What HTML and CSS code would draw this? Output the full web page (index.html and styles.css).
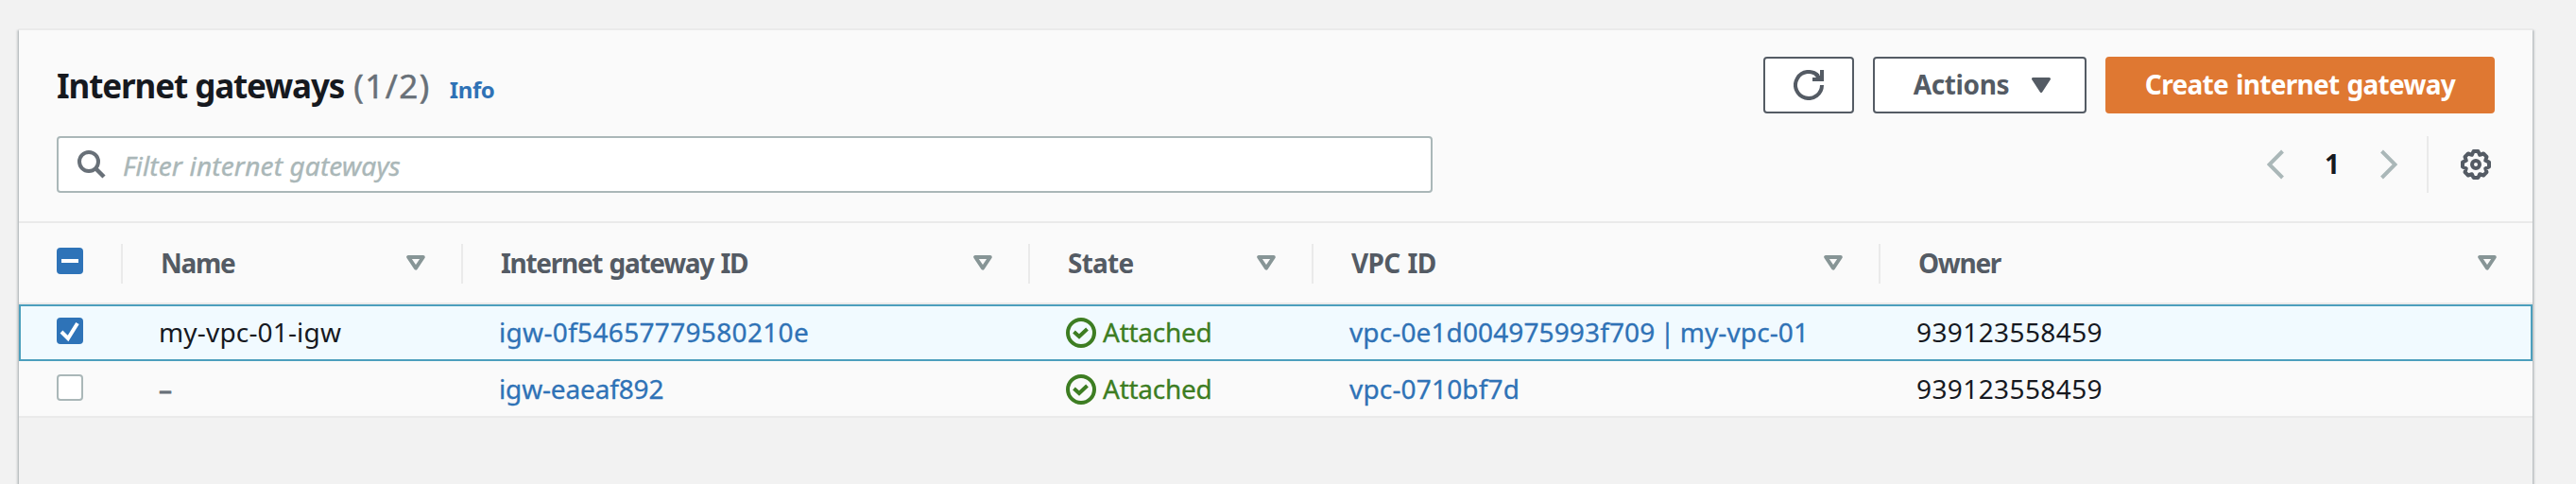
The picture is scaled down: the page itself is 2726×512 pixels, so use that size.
FILE: index.html
```html
<!DOCTYPE html>
<html lang="en">
<head>
<meta charset="utf-8">
<title>Internet gateways</title>
<link rel="stylesheet" href="styles.css">
</head>
<body>
<svg class="defs" width="0" height="0">
  <symbol id="sort" viewBox="0 0 20 16"><path d="M2.200 2h15.600L10 13.600z" fill="none" stroke="#879596" stroke-width="4" stroke-linejoin="round"/></symbol>
  <symbol id="ok" viewBox="0 0 32 32"><circle cx="16" cy="16" r="14" fill="none" stroke="#3d7d22" stroke-width="4"/><path d="M8.500 15l5.500 5 8.500-8" fill="none" stroke="#3d7d22" stroke-width="4"/></symbol>
</svg>
<main class="panel">
  <header class="head">
    <div class="title-row">
      <h1 class="title"><span class="title-name">Internet gateways</span><span class="count">(1/2)</span><a class="info">Info</a></h1>
      <div class="actions">
        <button class="btn refresh"><svg width="32" height="32" viewBox="0 0 32 32"><path d="M30 16a14 14 0 1 1-4-9.800" fill="none" stroke="#545b64" stroke-width="4"/><path d="M28 0h4v12H20V8h8z" fill="#545b64"/><path d="M23.500 4.500l5 5" stroke="#545b64" stroke-width="4"/></svg></button>
        <button class="btn menu"><span class="label">Actions</span><svg width="20" height="16" viewBox="0 0 20 16"><path d="M1.500 1.500h17L10 14.500z" fill="#545b64" stroke="#545b64" stroke-width="3" stroke-linejoin="round"/></svg></button>
        <button class="btn primary"><span class="label">Create internet gateway</span></button>
      </div>
    </div>
    <div class="filter-row">
      <div class="search"><svg width="30" height="30" viewBox="0 0 30 30"><circle cx="12" cy="12" r="10" fill="none" stroke="#687078" stroke-width="4"/><path d="M19 19l9 9" stroke="#687078" stroke-width="4.500"/></svg><span class="placeholder">Filter internet gateways</span></div>
      <div class="pager">
        <svg width="18" height="32" viewBox="0 0 18 32"><path d="M16.500 2L2.500 16l14 14" fill="none" stroke="#aab7b8" stroke-width="4"/></svg>
        <b class="page">1</b>
        <svg width="18" height="32" viewBox="0 0 18 32"><path d="M1.500 2l14 14-14 14" fill="none" stroke="#aab7b8" stroke-width="4"/></svg>
        <i class="bar"></i>
        <svg width="32" height="32" viewBox="-16 -16 32 32" fill="none" stroke="#545b64" stroke-width="4"><path stroke-linejoin="round" d="M14 -2.400V2.400L10.200 4.200L11.500 8.100L8.100 11.500L4.200 10.200L2.400 14H-2.400L-4.200 10.200L-8.100 11.500L-11.500 8.100L-10.200 4.200L-14 2.400V-2.400L-10.200 -4.200L-11.500 -8.100L-8.100 -11.500L-4.200 -10.200L-2.400 -14H2.400L4.200 -10.200L8.100 -11.500L11.500 -8.100L10.200 -4.200Z"/><circle r="4"/></svg>
      </div>
    </div>
  </header>
  <section class="table">
    <div class="row header">
      <div class="cell"><span class="box on"><svg width="28" height="28"><path d="M5 14h18" stroke="#fff" stroke-width="4"/></svg></span></div>
      <div class="cell"><span class="col">Name</span><svg class="sort" width="20" height="16"><use href="#sort"/></svg></div>
      <div class="cell"><span class="col">Internet gateway ID</span><svg class="sort" width="20" height="16"><use href="#sort"/></svg></div>
      <div class="cell"><span class="col col-state">State</span><svg class="sort" width="20" height="16"><use href="#sort"/></svg></div>
      <div class="cell"><span class="col col-vpc">VPC ID</span><svg class="sort" width="20" height="16"><use href="#sort"/></svg></div>
      <div class="cell"><span class="col">Owner</span><svg class="sort" width="20" height="16"><use href="#sort"/></svg></div>
    </div>
    <div class="row selected">
      <div class="cell"><span class="box on"><svg width="28" height="28"><path d="M5 15l7 7L22 6" fill="none" stroke="#fff" stroke-width="4"/></svg></span></div>
      <div class="cell"><span class="name">my-vpc-01-igw</span></div>
      <div class="cell"><a class="link long">igw-0f54657779580210e</a></div>
      <div class="cell"><svg width="32" height="32"><use href="#ok"/></svg><span class="status">Attached</span></div>
      <div class="cell"><a class="link vpc">vpc-0e1d004975993f709 | my-vpc-01</a></div>
      <div class="cell"><span class="owner">939123558459</span></div>
    </div>
    <div class="row plain">
      <div class="cell"><span class="box"></span></div>
      <div class="cell"><span class="dash">–</span></div>
      <div class="cell"><a class="link short">igw-eaeaf892</a></div>
      <div class="cell"><svg width="32" height="32"><use href="#ok"/></svg><span class="status">Attached</span></div>
      <div class="cell"><a class="link name">vpc-0710bf7d</a></div>
      <div class="cell"><span class="owner">939123558459</span></div>
    </div>
  </section>
</main>
</body>
</html>
```

FILE: styles.css
```css
* { box-sizing: border-box; }
body {
  margin: 0;
  height: 512px;
  overflow: hidden;
  background: #f2f2f2;
  color: #16191f;
  font: 28px/40px "Noto Sans", "Open Sans", sans-serif;
  white-space: nowrap;
}
.defs { position: absolute; }
svg { flex: none; display: block; }
.panel {
  margin: 30px 46px 0 20px;
  height: 482px;
  border-top: 2px solid #eaeaea;
  background: #f2f2f2;
  box-shadow: 0 2px 2px rgba(0, 28, 36, .3), 2px 2px 2px rgba(0, 28, 36, .15), -2px 2px 2px rgba(0, 28, 36, .15);
}
.head {
  height: 204px;
  padding: 28px 40px 0;
  background: #fafafa;
  border-bottom: 2px solid #eaeaea;
}
.title-row, .filter-row { display: flex; justify-content: space-between; height: 60px; }
.filter-row { margin-top: 24px; }
.title { display: flex; align-items: baseline; margin: 0; font-size: 35px; line-height: 62px; }
.title-name { letter-spacing: -1.1px; }
.count { margin-left: 10px; font-weight: 400; color: #687078; letter-spacing: 1.5px; -webkit-text-stroke: .5px #687078; }
.info { margin-left: 20px; font-size: 24px; font-weight: 700; color: #2f72b6; letter-spacing: -.4px; }
.actions { display: flex; gap: 20px; }
.btn {
  display: flex;
  align-items: center;
  justify-content: center;
  height: 60px;
  padding: 0;
  border: 2px solid #545b64;
  border-radius: 4px;
  background: #fff;
  color: #545b64;
  font: 700 28px/40px "Noto Sans", sans-serif;
}
.label { padding-bottom: 2px; letter-spacing: -.4px; }
.refresh { width: 96px; }
.menu { width: 226px; gap: 24px; padding-left: 5px; }
.primary { width: 412px; border-color: #df7832; background: #df7832; color: #fff; }
.primary .label { letter-spacing: -.7px; word-spacing: 1.5px; }
.search {
  display: flex;
  align-items: center;
  gap: 18px;
  width: 1456px;
  padding-left: 20px;
  border: 2px solid #aab7b8;
  border-radius: 4px;
  background: #fff;
}
.placeholder { padding-top: 1px; color: #aab7b8; font-style: italic; letter-spacing: .15px; -webkit-text-stroke: .4px #aab7b8; }
.pager { display: flex; align-items: center; margin-right: 4px; }
.page { width: 102px; padding-bottom: 2px; text-align: center; }
.bar { width: 2px; height: 60px; margin: 0 34px 0 31px; background: #eaeaea; }
.row {
  display: grid;
  grid-template-columns: 110px 360px 600px 300px 600px 690px;
  height: 60px;
  background: #fafafa;
  border-bottom: 2px solid #eaeaea;
}
.cell { display: flex; align-items: center; padding-left: 38px; }
.cell:first-child { padding-left: 40px; }
.header { height: 86px; padding-top: 2px; align-items: center; font-weight: 700; color: #545b64; }
.header .cell { height: 42px; padding: 0 38px 0 40px; border-right: 2px solid #eaeaea; }
.header .cell:last-child { border-right: 0; }
.col { padding-bottom: 3px; letter-spacing: -1.3px; word-spacing: 1.5px; }
.col-state { letter-spacing: -.75px; }
.col-vpc { letter-spacing: -.7px; }
.sort { margin: 0 0 2px auto; }
.header .box { margin-bottom: 6px; }
.selected { border: 2px solid #4c9fbd; background: #f1faff; }
.selected .cell { padding-left: 36px; }
.selected .cell:first-child { padding-left: 38px; }
.selected .cell > :not(svg) { margin-bottom: 2px; }
.selected .cell > .box { margin-bottom: 4px; }
.plain .cell > svg { margin-top: 2px; }
.plain .cell > .box { margin-bottom: 2px; }
.box { width: 28px; height: 28px; border: 2px solid #aab7b8; border-radius: 4px; background: #fff; }
.box.on { border: 0; background: #2e73b8; }
.name { letter-spacing: .17px; }
.link { color: #2f72b6; -webkit-text-stroke: .3px #2f72b6; }
.long { letter-spacing: .33px; }
.short { letter-spacing: -.15px; }
.vpc { letter-spacing: .12px; word-spacing: -2px; }
.owner { letter-spacing: .4px; }
.status { margin-left: 7px; color: #3d7d22; letter-spacing: -.25px; -webkit-text-stroke: .3px #3d7d22; }
.dash { color: #687078; -webkit-text-stroke: .8px #687078; }
```
